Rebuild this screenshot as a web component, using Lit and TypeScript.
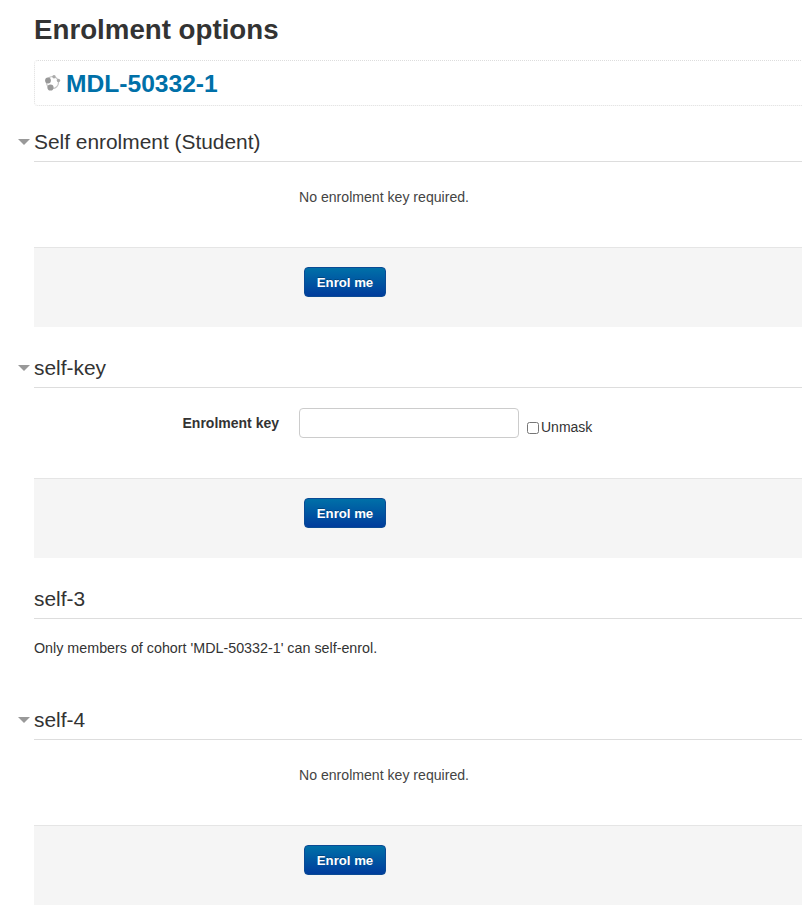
import { LitElement, html, css } from "lit";
import { customElement } from "lit/decorators.js";

const enrolButton = html`<div class="actions"><button class="btn">Enrol me</button></div>`;

@customElement("app-root")
export class AppRoot extends LitElement {
  static styles = css`
    :host { display: block; width: 802px; height: 910px; overflow: hidden; background: #fff;
      font-family: "Liberation Sans", Arial, sans-serif; color: #333; font-size: 14px; }
    .page { padding: 15px 0 0 34px; width: 820px; box-sizing: border-box; display: flex; flex-direction: column; }
    .page > * { width: 786px; box-sizing: border-box; }
    h2 { margin: 0; font-size: 27.7px; line-height: 30px; font-weight: bold; color: #333; }
    .course { margin: 15px 0 19px; height: 46px; border: 1px dotted #ddd; border-radius: 4px;
      display: flex; align-items: center; padding: 1px 0 0 9px; gap: 4px; }
    .course svg { width: 18px; height: 18px; flex: none; margin-top: -2px; }
    .course a { font-size: 24.6px; font-weight: bold; color: #0070a8; text-decoration: none; line-height: 30px; }
    .section + .section { margin-top: 24px; }
    .legend { height: 37px; border-bottom: 1px solid #ddd; margin: 0; font-size: 20.9px; font-weight: normal;
      line-height: 34px; color: #333; position: relative; box-sizing: border-box; }
    .legend.collapsible::before { content: ""; position: absolute; left: -16px; top: 14px; width: 0; height: 0;
      border-left: 6px solid transparent; border-right: 6px solid transparent; border-top: 6px solid #999; }
    .row { height: 85px; display: grid; grid-template-columns: 245px 1fr; column-gap: 20px; box-sizing: border-box; }
    .row.tall { height: 90px; }
    .msg { grid-column: 2; padding-top: 26px; line-height: 18px; font-size: 14.1px; color: #444; }
    .label { text-align: right; font-weight: bold; font-size: 14px; padding-top: 26px; line-height: 18px; }
    .field { display: flex; align-items: flex-start; padding-top: 20px; }
    input.key { width: 220px; height: 30px; box-sizing: border-box; border: 1px solid #ccc; border-radius: 4px;
      margin: 0; background: #fff; padding: 0 6px; }
    .unmask { display: flex; align-items: center; margin: 11px 0 0 8px; font-size: 14px; line-height: 16px; color: #333; }
    .unmask input { width: 12px; height: 12px; margin: 1px 2px 0 0; }
    .actions { border-top: 1px solid #e5e5e5; background: #f5f5f5; height: 80px; padding: 19px 0 0 270px; box-sizing: border-box; }
    .btn { display: block; width: 82px; height: 30px; padding: 0; border: 1px solid #0a4a94; border-radius: 4px;
      background: linear-gradient(to bottom, #0070a8, #003c9c); color: #fff; font: bold 13.2px "Liberation Sans", Arial, sans-serif;
      text-shadow: 0 -1px 0 rgba(0,0,0,.25); }
    .plain { height: 60px; padding-top: 20px; box-sizing: border-box; font-size: 14.3px; line-height: 18px; color: #333; }
  `;

  private heading(text: string, collapsible = true) {
    return html`<h3 class="legend ${collapsible ? "collapsible" : ""}">${text}</h3>`;
  }

  render() {
    return html`<div class="page">
      <h2>Enrolment options</h2>
      <div class="course">
        <svg viewBox="0 0 18 18" aria-hidden="true">
          <circle cx="8.5" cy="8.5" r="6" stroke="#c4c4c4" stroke-width="1.2" fill="none" />
          <circle cx="4" cy="6.5" r="2.9" fill="#999" />
          <circle cx="10" cy="2.8" r="1.7" fill="#aaa" />
          <circle cx="6.5" cy="13.5" r="3.1" fill="#999" />
          <circle cx="14.5" cy="6.5" r="1.7" fill="#aaa" />
        </svg>
        <a href="#">MDL-50332-1</a>
      </div>
      <div class="section">
        ${this.heading("Self enrolment (Student)")}
        <div class="row"><div class="msg">No enrolment key required.</div></div>
        ${enrolButton}
      </div>
      <div class="section">
        ${this.heading("self-key")}
        <div class="row tall">
          <div class="label">Enrolment key</div>
          <div class="field">
            <input class="key" type="text" />
            <label class="unmask"><input type="checkbox" />Unmask</label>
          </div>
        </div>
        ${enrolButton}
      </div>
      <div class="section">
        ${this.heading("self-3", false)}
        <div class="plain">Only members of cohort 'MDL-50332-1' can self-enrol.</div>
      </div>
      <div class="section">
        ${this.heading("self-4")}
        <div class="row"><div class="msg">No enrolment key required.</div></div>
        ${enrolButton}
      </div>
    </div>`;
  }
}
